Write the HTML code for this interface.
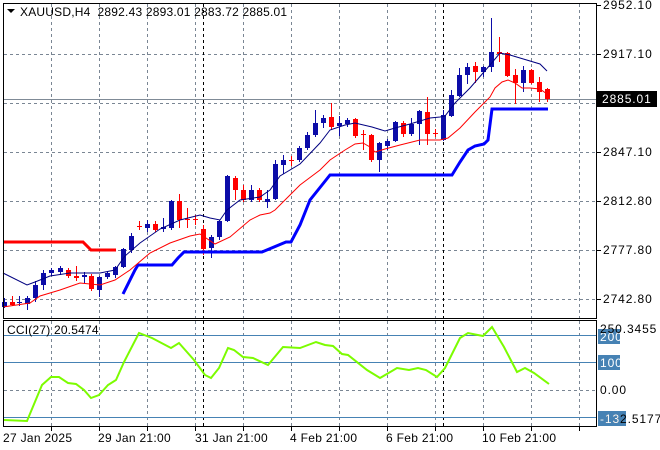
<!DOCTYPE html>
<html><head><meta charset="utf-8"><style>
html,body{margin:0;padding:0;background:#fff;width:660px;height:450px;overflow:hidden}
svg{display:block;font-family:"Liberation Sans",Tahoma,sans-serif;font-size:12px}
</style></head><body>
<svg width="660" height="450" viewBox="0 0 660 450" xmlns="http://www.w3.org/2000/svg" id="s">
<rect width="660" height="450" fill="#fff"/>
<g stroke="#7a8694" stroke-dasharray="3,3" stroke-width="1" id="grid"></g>
<line x1="3" y1="99.5" x2="597" y2="99.5" stroke="#7f8a96"/>
<g id="cndl"></g>
<polyline fill="none" stroke="#ff0000" stroke-width="3" points="3,242 83,242 91,250 116,250"/>
<polyline fill="none" stroke="#0000ff" stroke-width="3" points="123,294 135,270 138,265 172,265 178,258 184,252 262,252 286,242 291,242 300,225 310,200 322,185 330,175 452,175 460,162 468,150 475,146 484,144 488,140 492,109 548,109"/>
<polyline fill="none" stroke="#000080" stroke-width="1" points="3,273 27,285 35,282 50,276 70,273 100,273 115,270 125,256 140,243 160,229 180,220 200,215 210,218 220,220 227,210 240,200 260,197 270,190 280,176 300,164 320,143 330,130 345,125 355,123 372,127 385,131 395,128 410,124 430,118 440,117 445,116 455,103 470,88 490,65 500,53 510,55 520,58 540,64 547,71"/>
<polyline fill="none" stroke="#ff0000" stroke-width="1" points="3,307 30,303 40,296 60,290 80,283 100,285 115,280 130,270 150,253 170,243 190,236 200,234 215,244 230,237 250,220 260,215 270,213 275,210 285,200 300,185 320,170 330,160 345,150 355,144 363,143 370,147 375,152 385,149 400,145 420,140 440,140 448,138 460,128 475,112 490,97 495,88 502,82 508,80 515,83 522,88 530,88 540,89 547,94"/>
<rect x="3.5" y="3.5" width="593" height="315" fill="none" stroke="#000"/>
<rect x="3.5" y="320.5" width="593" height="106" fill="none" stroke="#000"/>
<g stroke="#4682b4"><line x1="4" y1="335.5" x2="596" y2="335.5"/><line x1="4" y1="362.5" x2="596" y2="362.5"/><line x1="4" y1="417.5" x2="596" y2="417.5"/></g>
<line x1="4" y1="390.5" x2="596" y2="390.5" stroke="#7a8694" stroke-dasharray="3,3"/>
<polyline fill="none" stroke="#7cfc00" stroke-width="2" points="4,420 27,421 42,385 51,377 59,377 68,383 76,384 84,390 91,398 99,395 108,385 116,380 124,362 139,333 152,338 171,348 179,343 194,360 205,375 211,378 219,368 228,348 234,350 243,357 253,358 268,365 283,347 300,348 316,342 325,345 333,346 342,354 348,355 367,370 380,378 397,368 409,370 418,368 426,370 437,377 445,368 460,338 468,333 483,336 492,327 504,347 517,372 525,368 534,373 549,384"/>
<text x="7" y="334" fill="#000" letter-spacing="0.2">CCI(27) 20.5474</text>
<path d="M7 9 L15 9 L11 13 Z" fill="#000"/>
<text x="20" y="16" fill="#000" letter-spacing="0.2">XAUUSD,H4&#160;&#160;2892.43 2893.01 2883.72 2885.01</text>
<g fill="#000" id="ax" letter-spacing="0.9"></g>
<rect x="597" y="91" width="60" height="16" fill="#000"/>
<text x="602" y="103" fill="#fff" letter-spacing="0.9">2885.01</text>
<rect x="598" y="329" width="22" height="15" fill="#4682b4"/>
<rect x="598" y="355" width="22" height="15" fill="#4682b4"/>
<rect x="598" y="411" width="28" height="15" fill="#4682b4"/>
<g letter-spacing="0.9">
<text x="600" y="341" fill="#fff">200</text>
<text x="600" y="367" fill="#fff">100</text>
<text x="600" y="394" fill="#000">0.00</text>
<text x="600" y="333" fill="#000">250.3455</text>
<text x="600" y="423" fill="#000">-132.5177</text>
<text x="600" y="423" fill="#fff">-13</text>
</g>
<g fill="#000" letter-spacing="0.3">
<text x="3" y="442">27 Jan 2025</text><text x="98" y="442">29 Jan 21:00</text><text x="195" y="442">31 Jan 21:00</text><text x="290" y="442">4 Feb 21:00</text><text x="386" y="442">6 Feb 21:00</text><text x="482" y="442">10 Feb 21:00</text>
</g>
<g stroke="#000" id="ticks"></g>
</svg>
<script>
var NS="http://www.w3.org/2000/svg";
function el(p,t,a){var e=document.createElementNS(NS,t);for(var k in a)e.setAttribute(k,a[k]);document.getElementById(p).appendChild(e);return e;}
var hy=[54,103,152,201,250,299];
for(var x=51;x<597;x+=48){el("grid","line",{x1:x+.5,y1:4,x2:x+.5,y2:318});el("grid","line",{x1:x+.5,y1:321,x2:x+.5,y2:426});el("ticks","line",{x1:x+.5,y1:427,x2:x+.5,y2:431});}
hy.forEach(function(y){el("grid","line",{x1:4,y1:y+.5,x2:596,y2:y+.5});});
[203,443].forEach(function(x){el("grid","line",{x1:x+.5,y1:4,x2:x+.5,y2:318,stroke:"#000"});el("grid","line",{x1:x+.5,y1:321,x2:x+.5,y2:426,stroke:"#000"});});
var lab=[[5,"2952.10"],[54,"2917.10"],[152,"2847.10"],[201,"2812.80"],[250,"2777.80"],[299,"2742.80"]];
lab.forEach(function(l){var t=el("ax","text",{x:603,y:l[0]+4});t.textContent=l[1];el("ticks","line",{x1:597,y1:l[0]+.5,x2:601,y2:l[0]+.5});});
var C=[[4,302,307,298,308,"b"],[12,302,305,296,306,"r"],[19,302,303,296,306,"b"],[27,298,304,296,310,"b"],[35,285,298,281,302,"b"],[43,273,285,270,290,"b"],[51,270,273,268,276,"b"],[60,268,272,266,275,"b"],[68,270,276,268,278,"r"],[76,276,278,266,281,"r"],[84,275,277,272,283,"b"],[91,276,289,274,291,"r"],[99,277,290,276,297,"b"],[107,273,277,271,279,"b"],[115,267,275,266,278,"b"],[123,249,267,248,268,"b"],[131,236,250,233,253,"b"],[139,226,227,221,230,"r"],[147,224,228,220,232,"b"],[155,224,230,221,232,"r"],[163,227,229,218,232,"b"],[171,201,228,200,230,"b"],[179,201,220,194,228,"r"],[187,219,220,208,228,"r"],[195,219,220,215,225,"r"],[203,229,249,225,255,"r"],[211,237,248,235,258,"b"],[219,221,237,220,240,"b"],[227,176,221,175,222,"b"],[235,178,190,176,200,"r"],[243,190,200,185,202,"r"],[251,190,200,185,202,"b"],[259,190,200,188,202,"r"],[267,199,202,190,208,"b"],[275,164,199,160,200,"b"],[283,160,165,155,174,"b"],[291,160,161,156,166,"r"],[299,148,160,146,162,"b"],[307,135,148,132,150,"b"],[315,123,135,110,137,"b"],[323,118,123,115,128,"b"],[331,117,127,103,130,"r"],[339,123,126,116,136,"b"],[347,120,124,118,127,"b"],[355,119,136,118,138,"r"],[363,134,135,130,150,"r"],[371,135,160,134,162,"r"],[379,143,160,142,172,"b"],[387,141,146,139,150,"b"],[395,122,141,121,142,"b"],[403,123,134,121,137,"r"],[411,124,134,118,136,"b"],[419,111,124,110,145,"b"],[427,112,134,97,145,"r"],[435,133,134,129,137,"r"],[443,115,140,110,141,"b"],[451,95,116,90,117,"b"],[459,75,96,68,97,"b"],[467,67,75,63,84,"b"],[475,66,72,62,83,"r"],[483,67,72,66,77,"b"],[491,52,67,18,72,"b"],[499,52,54,37,62,"r"],[507,53,76,52,77,"r"],[515,75,83,69,104,"r"],[523,70,83,66,92,"b"],[531,70,83,69,84,"r"],[539,82,92,77,102,"r"],[547,89,99,88,102,"r"]];
C.forEach(function(c){var col=c[5]=="b"?"#0c0ca8":"#ff0000";el("cndl","line",{x1:c[0]+.5,y1:c[3],x2:c[0]+.5,y2:c[4],stroke:col});var h=Math.max(c[2]-c[1],1);el("cndl","rect",{x:c[0]-2,y:c[1],width:5,height:h,fill:col});});
</script>
</body></html>
